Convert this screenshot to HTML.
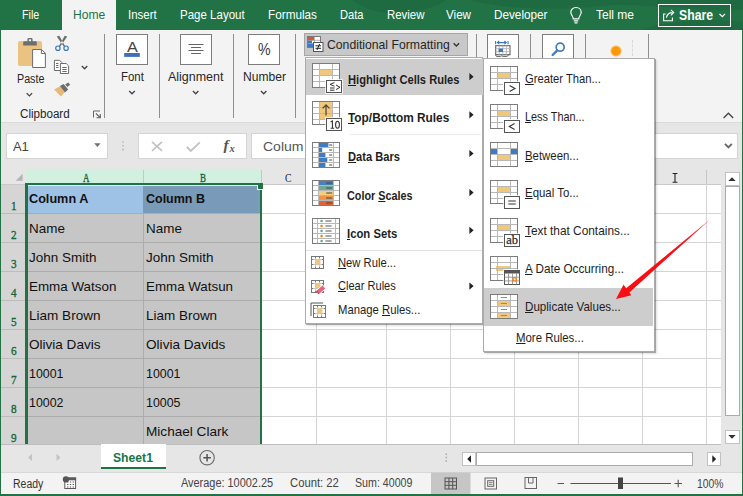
<!DOCTYPE html>
<html><head><meta charset="utf-8">
<style>
*{box-sizing:border-box;margin:0;padding:0}
html,body{width:743px;height:496px;overflow:hidden;background:#f3f3f3}
body{font-family:"Liberation Sans",sans-serif;font-size:12px;color:#262626;position:relative}
.a{position:absolute}
.t{position:absolute;white-space:nowrap;line-height:1;transform-origin:0 0;color:#262626}
.sep{position:absolute;width:1px;background:#8f8f8f;top:34px;height:84px}
.bx{position:absolute;top:34px;width:32px;height:31px;background:#fff;border:1px solid #7d7d7d}
.wbox{position:absolute;background:#fff;border:1px solid #d4d4d4}
.menu{position:absolute;background:#fff;border:1px solid #ababab;box-shadow:1px 1px 0 rgba(0,0,0,.28),2px 2px 2px rgba(0,0,0,.12)}
.hl{position:absolute;background:#cdcdcd}
u{text-decoration:underline;text-underline-offset:0.5px;text-decoration-thickness:1px}
svg{position:absolute;overflow:visible}
.vl{position:absolute;width:1px;background:#d4d4d4;top:184px;height:260px}
.hln{position:absolute;height:1px;background:#d4d4d4;left:262px;width:459px}
</style></head><body>

<div class="a" style="left:0;top:0;width:743px;height:30px;background:#217346"></div>
<svg style="left:0;top:0" width="743" height="30" viewBox="0 0 743 30"><path d="M352 0 C362 8 380 15 400 13 C420 11 436 8 446 0 Z M470 0 C500 9 560 11 600 6 C640 2 690 12 743 10 V0 Z M640 30 C670 20 710 18 743 22 V30 Z" fill="#000" opacity=".07"/></svg>
<div class="a" style="left:62px;top:0;width:54px;height:30px;background:#f3f3f3"></div>
<span class="t" style="left:21.80px;top:7.89px;font-size:13.30px;color:#fff;transform:scaleX(0.8023);">File</span>
<span class="t" style="left:72.70px;top:7.89px;font-size:13.30px;color:#217346;transform:scaleX(0.9103);">Home</span>
<span class="t" style="left:128.00px;top:7.89px;font-size:13.30px;color:#fff;transform:scaleX(0.8628);">Insert</span>
<span class="t" style="left:180.20px;top:7.89px;font-size:13.30px;color:#fff;transform:scaleX(0.8665);">Page Layout</span>
<span class="t" style="left:268.00px;top:7.89px;font-size:13.30px;color:#fff;transform:scaleX(0.8841);">Formulas</span>
<span class="t" style="left:340.40px;top:7.89px;font-size:13.30px;color:#fff;transform:scaleX(0.8365);">Data</span>
<span class="t" style="left:387.00px;top:7.89px;font-size:13.30px;color:#fff;transform:scaleX(0.8599);">Review</span>
<span class="t" style="left:446.00px;top:7.89px;font-size:13.30px;color:#fff;transform:scaleX(0.8743);">View</span>
<span class="t" style="left:493.50px;top:7.89px;font-size:13.30px;color:#fff;transform:scaleX(0.8827);">Developer</span>
<span class="t" style="left:595.50px;top:7.89px;font-size:13.30px;color:#fff;transform:scaleX(0.9021);">Tell me</span>
<div class="a" style="left:658px;top:3.5px;width:72.5px;height:23px;border:1px solid #fff"></div>
<span class="t" style="left:679.20px;top:7.90px;font-size:14.00px;color:#fff;font-weight:bold;transform:scaleX(0.8735);">Share</span>
<svg class="a" style="left:0;top:0" width="1" height="1"><path d="M719.5 13.9 L722.3 16.7 L725.1 13.9" fill="none" stroke="#fff" stroke-width="1.3"/></svg>
<svg style="left:663px;top:8px" width="14" height="14" viewBox="0 0 14 14"><path d="M2.6 6 H0.6 V12.8 H9.4 V9.6" fill="none" stroke="#fff" stroke-width="1.1"/><path d="M3.4 9.8 C3.8 6.6 5.8 4.6 9.6 4.6 M7.8 1.8 L10.8 4.6 L7.8 7.4" fill="none" stroke="#fff" stroke-width="1.1"/></svg>
<svg style="left:568px;top:6px" width="16" height="20" viewBox="0 0 16 20"><path d="M8 1.5 C4.5 1.5 2.8 4 2.8 6.3 C2.8 8.8 5 10 5.3 12.8 H10.7 C11 10 13.2 8.8 13.2 6.3 C13.2 4 11.5 1.5 8 1.5 Z M5.8 14.8 H10.2 M6.5 16.8 H9.5" fill="none" stroke="#fff" stroke-width="1.2"/></svg>
<div class="a" style="left:0;top:30px;width:743px;height:92px;background:#f3f3f3"></div>
<div class="sep" style="left:104px"></div><div class="sep" style="left:159px"></div><div class="sep" style="left:233px"></div><div class="sep" style="left:295px"></div><div class="sep" style="left:475.5px"></div><div class="sep" style="left:530px"></div><div class="sep" style="left:585px"></div><div class="sep" style="left:648px"></div>
<div class="bx" style="left:116px"></div><div class="bx" style="left:180px"></div><div class="bx" style="left:248px"></div><div class="bx" style="left:487px;height:26px"></div><div class="bx" style="left:542px;height:26px"></div>
<span class="t" style="left:16.80px;top:73.20px;font-size:12.00px;transform:scaleX(0.8929);">Paste</span><span class="t" style="left:120.70px;top:70.90px;font-size:12.00px;transform:scaleX(0.9535);">Font</span><span class="t" style="left:168.40px;top:70.90px;font-size:12.00px;transform:scaleX(1.0379);">Alignment</span><span class="t" style="left:242.70px;top:70.90px;font-size:12.00px;transform:scaleX(1.0073);">Number</span><span class="t" style="left:19.60px;top:107.60px;font-size:12.00px;transform:scaleX(0.9674);">Clipboard</span>
<svg class="a" style="left:0;top:0" width="1" height="1"><path d="M26.6 93.1 L29.4 95.9 L32.1 93.1" fill="none" stroke="#444" stroke-width="1.3"/></svg><svg class="a" style="left:0;top:0" width="1" height="1"><path d="M129.2 91.0 L132.0 93.8 L134.8 91.0" fill="none" stroke="#444" stroke-width="1.3"/></svg><svg class="a" style="left:0;top:0" width="1" height="1"><path d="M192.9 91.0 L195.7 93.8 L198.4 91.0" fill="none" stroke="#444" stroke-width="1.3"/></svg><svg class="a" style="left:0;top:0" width="1" height="1"><path d="M260.9 91.0 L263.7 93.8 L266.4 91.0" fill="none" stroke="#444" stroke-width="1.3"/></svg><svg class="a" style="left:0;top:0" width="1" height="1"><path d="M81.8 66.0 L84.6 68.8 L87.3 66.0" fill="none" stroke="#444" stroke-width="1.3"/></svg>
<svg class="a" style="left:0;top:0" width="1" height="1"><path d="M723.6 118 L728.4 113.2 L733.2 118" fill="none" stroke="#444" stroke-width="1.3"/></svg>
<!-- paste -->
<svg style="left:0;top:0" width="110" height="122" viewBox="0 0 110 122">
<rect x="18" y="41" width="24" height="25" rx="2" fill="#eac282"/>
<path d="M23.2 45.4 V42.6 Q23.2 41.2 24.6 41.2 H27.4 V39.4 Q27.4 38 28.8 38 H31.2 Q32.6 38 32.6 39.4 V41.2 H35.4 Q36.8 41.2 36.8 42.6 V45.4 Z" fill="#6d6d6d"/>
<rect x="28.9" y="39.3" width="2.2" height="1.9" fill="#f3f3f3"/>
<path d="M32.6 49.5 H41.6 L45.4 53.3 V67.5 H32.6 Z" fill="#fff" stroke="#6d6d6d" stroke-width="1"/>
<path d="M41.4 49.6 V53.5 H45.3" fill="none" stroke="#6d6d6d" stroke-width="1"/>
<!-- scissors -->
<path d="M56.8 36.6 L59.3 35.8 L63 42.6 L65.2 46.2 L64 46.8 L61.2 43 Z M67.2 36.6 L64.7 35.8 L61 42.6 L58.8 46.2 L60 46.8 L62.8 43 Z" fill="#6d6d6d"/>
<circle cx="57.9" cy="48.2" r="2.2" fill="none" stroke="#3b78c2" stroke-width="1.2"/>
<circle cx="66.1" cy="48.2" r="2.2" fill="none" stroke="#3b78c2" stroke-width="1.2"/>
<!-- copy -->
<path d="M54.4 60.3 H59.6 L61.8 62.5 V70.5 H54.4 Z" fill="#fff" stroke="#6d6d6d" stroke-width="1"/>
<path d="M60.4 63.5 H66.2 L68.6 65.9 V73.5 H60.4 Z" fill="#fff" stroke="#6d6d6d" stroke-width="1"/>
<path d="M56 63.5 H58.5 M56 65.5 H58.5 M56 67.5 H58.5 M62.3 67.5 H66.7 M62.3 69.5 H66.7 M62.3 71.5 H66.7" stroke="#3b78c2" stroke-width="1"/>
<!-- format painter -->
<path d="M54.1 89.6 L60.2 86.2 L64.5 92.2 L61 96.5 Z" fill="#eab874"/>
<path d="M59.9 86 L63.6 83.9 L68.2 89.4 L64.9 92.4 Z" fill="#6d6d6d"/>
<path d="M65.2 84.4 L68.2 82.6 L70.2 84.8 L67.3 87 Z" fill="#6d6d6d"/>
<!-- dialog launcher -->
<path d="M93.5 117.5 V111 H100" fill="none" stroke="#666" stroke-width="1"/>
<path d="M96 113.5 L100 117.5 M100.3 114 V117.8 H96.5" fill="none" stroke="#666" stroke-width="1.1"/>
</svg>
<!-- Font A -->
<svg style="left:116px;top:34px" width="32" height="31" viewBox="0 0 32 31">
<rect x="8.2" y="19" width="15.6" height="3.9" fill="#3f6fb5"/></svg>
<!-- alignment -->
<svg style="left:180px;top:34px" width="32" height="31" viewBox="0 0 32 31">
<path d="M8.5 10.5 H23.5 M11 13.5 H21 M8.5 16.5 H23.5 M11 19.5 H21" stroke="#666" stroke-width="1"/></svg>
<span class="t" style="left:258.20px;top:41.06px;font-size:16.40px;color:#3a3a3a;transform:scaleX(0.8643);">%</span><span class="t" style="left:126.90px;top:38.51px;font-size:15.40px;color:#444;transform:scaleX(1.0521);">A</span>
<div class="a" style="left:304px;top:33px;width:164px;height:23px;background:#c8c8c8;border:1px solid #a6a6a6"></div>
<svg style="left:307px;top:36px" width="17" height="16" viewBox="0 0 17 16">
<rect x="0.5" y="0.5" width="13" height="11" fill="#fff" stroke="#7a7a7a" stroke-width="1"/>
<rect x="1" y="1" width="6" height="3.3" fill="#d9532c"/><rect x="1" y="4.3" width="4" height="3.3" fill="#3f78c2"/><rect x="1" y="7.6" width="6" height="3.4" fill="#3f78c2"/>
<path d="M7.5 1 V11 M1 4.3 H13 M1 7.6 H13" stroke="#9a9a9a" stroke-width=".7"/>
<rect x="6.5" y="6.5" width="9.5" height="9" fill="#fff" stroke="#555" stroke-width="1"/>
<path d="M8.5 9.8 H14 M8.5 12.3 H14 M12.6 8 L10 14" stroke="#222" stroke-width="1" fill="none"/></svg>
<span class="t" style="left:326.70px;top:37.78px;font-size:13.20px;transform:scaleX(0.9255);">Conditional Formatting</span><svg class="a" style="left:0;top:0" width="1" height="1"><path d="M453.6 43.2 L456.4 46.0 L459.1 43.2" fill="none" stroke="#333" stroke-width="1.3"/></svg>
<svg style="left:487px;top:34px" width="32" height="26" viewBox="0 0 32 26">
<path d="M8.6 7 V10.2 M21 7 V10.2 M10.6 8.6 H19 M12.2 7 L10.4 8.6 L12.2 10.2 M17.4 7 L19.2 8.6 L17.4 10.2" fill="none" stroke="#3b78c2" stroke-width="1.1"/>
<rect x="8.7" y="11.7" width="14.3" height="9" fill="#fff" stroke="#5f5f5f" stroke-width="1.1"/>
<path d="M12.2 11.7 V20.7 M15.8 11.7 V20.7 M19.4 11.7 V20.7 M8.7 14.7 H23 M8.7 17.7 H23" stroke="#b4b4b4" stroke-width=".9"/>
<rect x="11.6" y="14.6" width="4.4" height="3.4" fill="#3b78c2"/>
<path d="M8.9 20.7 V21.6 Q8.9 22.4 9.8 22.4 H13.6 Q14.4 22.4 14.8 21.6 Q15.2 22.4 16 22.4 H19.8 Q20.8 22.4 21.4 21.2" fill="none" stroke="#5f5f5f" stroke-width="1"/></svg>
<svg style="left:542px;top:34px" width="32" height="26" viewBox="0 0 32 26">
<circle cx="18.2" cy="13.2" r="4" fill="#fff" stroke="#3f7cc4" stroke-width="1.7"/><path d="M15 16.6 L10.6 21" stroke="#3f7cc4" stroke-width="2.3" stroke-linecap="round"/></svg>
<div class="a" style="left:606px;top:41px;width:20px;height:20px;border-radius:50%;background:radial-gradient(circle closest-side,#ff9908 0,#ff9908 40%,rgba(255,158,30,.7) 49%,rgba(255,190,110,0) 60%)"></div>
<div class="a" style="left:632px;top:40px;width:0;height:16px;border-left:1px dashed #d8d8d8"></div>

<div class="a" style="left:0;top:122px;width:743px;height:47px;background:#e6e6e6"></div>
<div class="a" style="left:0;top:122px;width:743px;height:1px;background:#dadada"></div>
<div class="wbox" style="left:6px;top:133px;width:101.5px;height:25.5px"></div>
<div class="wbox" style="left:138px;top:133px;width:109.3px;height:25.5px"></div>
<div class="wbox" style="left:251px;top:133px;width:486.5px;height:25.5px"></div>
<svg style="left:0;top:122px" width="743" height="47" viewBox="0 122 743 47">
<path d="M94.2 143.2 H100.6 L97.4 147 Z" fill="#6f6f6f"/>
<path d="M122.4 142 h1.3 M122.4 145.8 h1.3 M122.4 149.6 h1.3" stroke="#b0b0b0" stroke-width="1.6"/>
<path d="M152 141.8 L162 150.8 M162 141.8 L152 150.8" stroke="#c2c2c2" stroke-width="1.7" fill="none"/>
<path d="M186.8 147 L190.8 151 L199.8 142.3" stroke="#c2c2c2" stroke-width="1.8" fill="none"/>
<path d="M725 143.8 L728.4 147.4 L731.8 143.8" stroke="#666" stroke-width="1.8" fill="none"/>
</svg>
<span class="t" style="left:13.10px;top:140.28px;font-size:13.20px;color:#444;transform:scaleX(0.9789);">A1</span><span class="t" style="left:263.00px;top:140.28px;font-size:13.20px;color:#555;transform:scaleX(1.0627);">Colum</span>
<span class="t" style="left:223.60px;top:137.42px;font-size:15.50px;color:#555;font-weight:bold;font-family:'Liberation Serif',serif;"><i>f</i></span><span class="t" style="left:229.40px;top:143.67px;font-size:10.50px;color:#555;font-style:italic;font-weight:bold;font-family:'Liberation Serif',serif;">x</span>

<div class="a" style="left:0;top:169px;width:743px;height:275px;background:#e6e6e6"></div>
<div class="a" style="left:26px;top:184px;width:695px;height:260px;background:#fff"></div>
<div class="a" style="left:26px;top:169px;width:234.5px;height:14.5px;background:#d2f0e0"></div>
<div class="a" style="left:1px;top:184px;width:25px;height:260px;background:#d5d5d5"></div>
<div class="a" style="left:0;top:183.5px;width:721px;height:1px;background:#c9c9c9"></div>
<div class="vl" style="left:316px"></div><div class="vl" style="left:386px"></div><div class="vl" style="left:450px"></div><div class="vl" style="left:514px"></div><div class="vl" style="left:578px"></div><div class="vl" style="left:642px"></div><div class="vl" style="left:706px"></div>
<div class="hln" style="top:213px"></div><div class="hln" style="top:242px"></div><div class="hln" style="top:271px"></div><div class="hln" style="top:300px"></div><div class="hln" style="top:329px"></div><div class="hln" style="top:358px"></div><div class="hln" style="top:387px"></div><div class="hln" style="top:416px"></div>
<div class="a" style="left:143px;top:170px;width:1px;height:13.5px;background:#c6c6c6"></div><div class="a" style="left:260.5px;top:170px;width:1px;height:13.5px;background:#c6c6c6"></div><div class="a" style="left:316px;top:170px;width:1px;height:13.5px;background:#c6c6c6"></div><div class="a" style="left:386px;top:170px;width:1px;height:13.5px;background:#c6c6c6"></div><div class="a" style="left:450px;top:170px;width:1px;height:13.5px;background:#c6c6c6"></div><div class="a" style="left:514px;top:170px;width:1px;height:13.5px;background:#c6c6c6"></div><div class="a" style="left:578px;top:170px;width:1px;height:13.5px;background:#c6c6c6"></div><div class="a" style="left:642px;top:170px;width:1px;height:13.5px;background:#c6c6c6"></div><div class="a" style="left:706px;top:170px;width:1px;height:13.5px;background:#c6c6c6"></div>
<div class="a" style="left:1px;top:213px;width:24.5px;height:1px;background:#bcbcbc"></div><div class="a" style="left:1px;top:242px;width:24.5px;height:1px;background:#bcbcbc"></div><div class="a" style="left:1px;top:271px;width:24.5px;height:1px;background:#bcbcbc"></div><div class="a" style="left:1px;top:300px;width:24.5px;height:1px;background:#bcbcbc"></div><div class="a" style="left:1px;top:329px;width:24.5px;height:1px;background:#bcbcbc"></div><div class="a" style="left:1px;top:358px;width:24.5px;height:1px;background:#bcbcbc"></div><div class="a" style="left:1px;top:387px;width:24.5px;height:1px;background:#bcbcbc"></div><div class="a" style="left:1px;top:416px;width:24.5px;height:1px;background:#bcbcbc"></div>
<div class="a" style="left:28px;top:186px;width:231.5px;height:258px;background:#c6c6c6"></div>
<div class="a" style="left:28px;top:186px;width:115px;height:27px;background:#9dc2e6"></div>
<div class="a" style="left:143px;top:186px;width:116.5px;height:27px;background:#7a9ab9"></div>
<div class="a" style="left:143px;top:213px;width:1px;height:231px;background:#acacac"></div>
<div class="a" style="left:28px;top:213px;width:231.5px;height:1px;background:#acacac"></div><div class="a" style="left:28px;top:242px;width:231.5px;height:1px;background:#acacac"></div><div class="a" style="left:28px;top:271px;width:231.5px;height:1px;background:#acacac"></div><div class="a" style="left:28px;top:300px;width:231.5px;height:1px;background:#acacac"></div><div class="a" style="left:28px;top:329px;width:231.5px;height:1px;background:#acacac"></div><div class="a" style="left:28px;top:358px;width:231.5px;height:1px;background:#acacac"></div><div class="a" style="left:28px;top:387px;width:231.5px;height:1px;background:#acacac"></div><div class="a" style="left:28px;top:416px;width:231.5px;height:1px;background:#acacac"></div>
<div class="a" style="left:25.3px;top:182.7px;width:236.5px;height:2.4px;background:#217346"></div>
<div class="a" style="left:25.3px;top:182.7px;width:2.4px;height:262px;background:#217346"></div>
<div class="a" style="left:259.7px;top:182.7px;width:2.2px;height:262px;background:#217346"></div>
<div class="a" style="left:27.7px;top:185.1px;width:232px;height:1px;background:#e8eef0"></div>
<div class="a" style="left:256.8px;top:185.1px;width:6.4px;height:4.6px;background:#fff"></div>
<div class="a" style="left:257.8px;top:183px;width:5.2px;height:5.7px;background:#217346"></div>
<svg style="left:0;top:169px" width="30" height="15" viewBox="0 169 30 15"><path d="M22.6 173.8 V180.8 H15.6 Z" fill="#b4b4b4"/></svg>
<span class="t" style="left:82.50px;top:171.84px;font-size:12.00px;font-family:'Liberation Serif',serif;color:#17653a;-webkit-text-stroke:0.35px #17653a;transform:scaleX(0.7495);">A</span><span class="t" style="left:199.50px;top:171.84px;font-size:12.00px;font-family:'Liberation Serif',serif;color:#17653a;-webkit-text-stroke:0.35px #17653a;transform:scaleX(0.7485);">B</span><span class="t" style="left:285.00px;top:171.84px;font-size:12.00px;font-family:'Liberation Serif',serif;color:#222;transform:scaleX(0.8109);">C</span>
<span class="t" style="left:10.60px;top:200.22px;font-size:12.50px;font-family:'Liberation Serif',serif;color:#17653a;-webkit-text-stroke:0.35px #17653a;transform:scaleX(0.8960);">1</span><span class="t" style="left:10.60px;top:229.22px;font-size:12.50px;font-family:'Liberation Serif',serif;color:#17653a;-webkit-text-stroke:0.35px #17653a;transform:scaleX(0.8960);">2</span><span class="t" style="left:10.60px;top:258.23px;font-size:12.50px;font-family:'Liberation Serif',serif;color:#17653a;-webkit-text-stroke:0.35px #17653a;transform:scaleX(0.8960);">3</span><span class="t" style="left:10.60px;top:287.23px;font-size:12.50px;font-family:'Liberation Serif',serif;color:#17653a;-webkit-text-stroke:0.35px #17653a;transform:scaleX(0.8960);">4</span><span class="t" style="left:10.60px;top:316.23px;font-size:12.50px;font-family:'Liberation Serif',serif;color:#17653a;-webkit-text-stroke:0.35px #17653a;transform:scaleX(0.8960);">5</span><span class="t" style="left:10.60px;top:345.23px;font-size:12.50px;font-family:'Liberation Serif',serif;color:#17653a;-webkit-text-stroke:0.35px #17653a;transform:scaleX(0.8960);">6</span><span class="t" style="left:10.60px;top:374.23px;font-size:12.50px;font-family:'Liberation Serif',serif;color:#17653a;-webkit-text-stroke:0.35px #17653a;transform:scaleX(0.8960);">7</span><span class="t" style="left:10.60px;top:403.23px;font-size:12.50px;font-family:'Liberation Serif',serif;color:#17653a;-webkit-text-stroke:0.35px #17653a;transform:scaleX(0.8960);">8</span><span class="t" style="left:10.60px;top:432.23px;font-size:12.50px;font-family:'Liberation Serif',serif;color:#17653a;-webkit-text-stroke:0.35px #17653a;transform:scaleX(0.8960);">9</span>
<span class="t" style="left:29.30px;top:192.86px;font-size:12.40px;color:#111;font-weight:bold;transform:scaleX(1.0216);">Column A</span><span class="t" style="left:29.30px;top:222.86px;font-size:12.40px;color:#111;transform:scaleX(1.0858);">Name</span><span class="t" style="left:29.30px;top:251.86px;font-size:12.40px;color:#111;transform:scaleX(1.0874);">John Smith</span><span class="t" style="left:29.30px;top:280.86px;font-size:12.40px;color:#111;transform:scaleX(1.0817);">Emma Watson</span><span class="t" style="left:29.30px;top:309.86px;font-size:12.40px;color:#111;transform:scaleX(1.0929);">Liam Brown</span><span class="t" style="left:29.30px;top:338.86px;font-size:12.40px;color:#111;transform:scaleX(1.0929);">Olivia Davis</span><span class="t" style="left:29.30px;top:367.86px;font-size:12.40px;color:#111;transform:scaleX(0.9980);">10001</span><span class="t" style="left:29.30px;top:396.86px;font-size:12.40px;color:#111;transform:scaleX(0.9980);">10002</span><span class="t" style="left:146.30px;top:192.86px;font-size:12.40px;color:#111;font-weight:bold;transform:scaleX(1.0083);">Column B</span><span class="t" style="left:146.30px;top:222.86px;font-size:12.40px;color:#111;transform:scaleX(1.0858);">Name</span><span class="t" style="left:146.30px;top:251.86px;font-size:12.40px;color:#111;transform:scaleX(1.0874);">John Smith</span><span class="t" style="left:146.30px;top:280.86px;font-size:12.40px;color:#111;transform:scaleX(1.0768);">Emma Watsun</span><span class="t" style="left:146.30px;top:309.86px;font-size:12.40px;color:#111;transform:scaleX(1.0868);">Liam Brown</span><span class="t" style="left:146.30px;top:338.86px;font-size:12.40px;color:#111;transform:scaleX(1.0980);">Olivia Davids</span><span class="t" style="left:146.30px;top:367.86px;font-size:12.40px;color:#111;transform:scaleX(0.9980);">10001</span><span class="t" style="left:146.30px;top:396.86px;font-size:12.40px;color:#111;transform:scaleX(0.9980);">10005</span><span class="t" style="left:146.30px;top:425.86px;font-size:12.40px;color:#111;transform:scaleX(1.0964);">Michael Clark</span>
<svg style="left:669.5px;top:171px" width="10" height="14" viewBox="0 0 10 14"><path d="M2.6 2.5 H7.4 M5 2.5 V11.2 M2.6 11.2 H7.4" stroke="#222" stroke-width="1.1" fill="none"/></svg>
<div class="a" style="left:721px;top:169px;width:21px;height:275px;background:#e6e6e6"></div>
<div class="a" style="left:724.5px;top:171.5px;width:15px;height:14.5px;background:#fff;border:1px solid #c1c1c1"></div>
<div class="a" style="left:724.5px;top:186px;width:15px;height:230px;background:#fff;border:1px solid #ababab"></div>
<div class="a" style="left:724.5px;top:429.5px;width:15px;height:14.5px;background:#fff;border:1px solid #c1c1c1"></div>
<svg style="left:721px;top:169px" width="21" height="275" viewBox="721 169 21 275"><path d="M728.3 181 L732 177.3 L735.7 181 Z M728.3 435 L735.7 435 L732 438.7 Z" fill="#333"/></svg>

<div class="a" style="left:0;top:444px;width:743px;height:29px;background:#e6e6e6"></div>
<div class="a" style="left:0;top:443.5px;width:721px;height:1px;background:#bdbdbd"></div>
<div class="a" style="left:0;top:472.5px;width:743px;height:21.5px;background:#f3f3f3"></div>
<div class="a" style="left:0;top:472px;width:743px;height:1px;background:#d8d8d8"></div>
<div class="a" style="left:101px;top:444px;width:64.5px;height:25px;background:#fff;border-bottom:2.4px solid #217346"></div>
<svg style="left:0;top:444px" width="743" height="52" viewBox="0 444 743 52">
<path d="M32 453.8 V461 L28 457.4 Z M56.5 453.8 V461 L60.5 457.4 Z" fill="#c3c3c3"/>
<circle cx="207.1" cy="457.7" r="7.2" fill="none" stroke="#6a6a6a" stroke-width="1.1"/>
<path d="M203.3 457.7 H210.9 M207.1 453.9 V461.5" stroke="#555" stroke-width="1.5"/>
<path d="M445.6 454.3 h1.3 M445.6 457.6 h1.3 M445.6 460.9 h1.3" stroke="#a0a0a0" stroke-width="1.5"/>
<!-- hscroll -->
<rect x="462.5" y="452.5" width="13" height="13" fill="#fff" stroke="#c1c1c1"/>
<rect x="476.5" y="452.5" width="216" height="13" fill="#fff" stroke="#ababab"/>
<rect x="707.5" y="452.5" width="13" height="13" fill="#fff" stroke="#c1c1c1"/>
<path d="M471 455.3 V462.7 L467.2 459 Z M712.3 455.3 V462.7 L716.1 459 Z" fill="#222"/>
<!-- macro icon -->
<rect x="64.8" y="478" width="10.8" height="10.5" fill="#fff" stroke="#5a5a5a" stroke-width="1"/>
<rect x="64.3" y="477.5" width="11.8" height="2.8" fill="#5a5a5a"/>
<circle cx="65.9" cy="479.4" r="3.1" fill="#555"/>
<path d="M67 482 h1.4 M69.8 482 h1.4 M72.6 482 h1.4 M67 484.5 h1.4 M69.8 484.5 h1.4 M72.6 484.5 h1.4 M67 487 h1.4 M69.8 487 h1.4 M72.6 487 h1.4" stroke="#5a5a5a" stroke-width="1"/>
<!-- view buttons -->
<rect x="431" y="472.5" width="39.5" height="21.5" fill="#c6c6c6"/>
<rect x="445" y="478" width="11.5" height="11" fill="none" stroke="#555" stroke-width="1"/>
<path d="M448.9 478 V489 M452.7 478 V489 M445 481.7 H456.5 M445 485.3 H456.5" stroke="#555" stroke-width="1"/>
<rect x="485" y="478" width="11.5" height="11" fill="none" stroke="#666" stroke-width="1"/>
<rect x="487.7" y="480.7" width="6" height="5.6" fill="none" stroke="#666" stroke-width="1"/>
<path d="M489 482.6 h3.5 M489 484.4 h3.5" stroke="#666" stroke-width=".8"/>
<rect x="525" y="477.5" width="11.5" height="11" fill="none" stroke="#666" stroke-width="1"/>
<path d="M528.5 477.5 V483 H533 V477.5" fill="none" stroke="#666" stroke-width="1"/>
<!-- zoom -->
<path d="M557.5 483.5 H564 M570.5 483.5 H671 M674.5 483.5 H682 M678.2 479.8 V487.2" stroke="#555" stroke-width="1.1"/>
<rect x="618" y="477.5" width="5" height="11.5" fill="#444"/>
</svg>
<span class="t" style="left:113.00px;top:450.78px;font-size:13.20px;color:#217346;font-weight:bold;transform:scaleX(0.9225);">Sheet1</span><span class="t" style="left:12.70px;top:478.30px;font-size:12.00px;color:#333;transform:scaleX(0.8735);">Ready</span><span class="t" style="left:180.90px;top:476.60px;font-size:12.00px;color:#444;transform:scaleX(0.9101);">Average: 10002.25</span><span class="t" style="left:289.80px;top:476.60px;font-size:12.00px;color:#444;transform:scaleX(0.9376);">Count: 22</span><span class="t" style="left:355.40px;top:476.60px;font-size:12.00px;color:#444;transform:scaleX(0.8869);">Sum: 40009</span><span class="t" style="left:697.00px;top:478.10px;font-size:12.00px;color:#444;transform:scaleX(0.8631);">100%</span>

<div class="menu" style="left:304.5px;top:57px;width:178.5px;height:267.3px"></div>
<div class="hl" style="left:305.5px;top:58.8px;width:177px;height:36.6px"></div>
<div class="a" style="left:350px;top:134px;width:131px;height:1px;background:#ececec"></div>
<div class="a" style="left:306px;top:249.7px;width:175.5px;height:1px;background:#e1e1e1"></div>
<span class="t" style="left:347.80px;top:74.02px;font-size:12.80px;font-weight:bold;color:#1e1e1e;transform:scaleX(0.8711);"><u>H</u>ighlight Cells Rules</span><span class="t" style="left:347.80px;top:112.12px;font-size:12.80px;font-weight:bold;color:#1e1e1e;transform:scaleX(0.9272);"><u>T</u>op/Bottom Rules</span><span class="t" style="left:347.80px;top:151.22px;font-size:12.80px;font-weight:bold;color:#1e1e1e;transform:scaleX(0.8701);"><u>D</u>ata Bars</span><span class="t" style="left:347.40px;top:189.82px;font-size:12.80px;font-weight:bold;color:#1e1e1e;transform:scaleX(0.8447);">Color <u>S</u>cales</span><span class="t" style="left:347.40px;top:227.82px;font-size:12.80px;font-weight:bold;color:#1e1e1e;transform:scaleX(0.8839);"><u>I</u>con Sets</span><span class="t" style="left:338.00px;top:256.92px;font-size:12.80px;color:#1e1e1e;transform:scaleX(0.8767);"><u>N</u>ew Rule...</span><span class="t" style="left:338.00px;top:280.42px;font-size:12.80px;color:#1e1e1e;transform:scaleX(0.8643);"><u>C</u>lear Rules</span><span class="t" style="left:338.00px;top:304.32px;font-size:12.80px;color:#1e1e1e;transform:scaleX(0.8829);">Manage <u>R</u>ules...</span>
<svg class="a" style="left:0;top:0" width="1" height="1"><path d="M469.4 73.1 L473.6 76.7 L469.4 80.3 Z" fill="#222"/></svg><svg class="a" style="left:0;top:0" width="1" height="1"><path d="M469.4 111.2 L473.6 114.8 L469.4 118.4 Z" fill="#222"/></svg><svg class="a" style="left:0;top:0" width="1" height="1"><path d="M469.4 149.9 L473.6 153.5 L469.4 157.1 Z" fill="#222"/></svg><svg class="a" style="left:0;top:0" width="1" height="1"><path d="M469.4 189.0 L473.6 192.6 L469.4 196.2 Z" fill="#222"/></svg><svg class="a" style="left:0;top:0" width="1" height="1"><path d="M469.4 226.7 L473.6 230.3 L469.4 233.9 Z" fill="#222"/></svg><svg class="a" style="left:0;top:0" width="1" height="1"><path d="M469.4 282.5 L473.6 286.1 L469.4 289.7 Z" fill="#222"/></svg>
<svg style="left:312px;top:63px" width="36" height="33" viewBox="0 0 36 33"><rect x="0" y="0" width="28" height="25" fill="#fff"/><rect x="8.0" y="7.0" width="12.0" height="5.0" fill="#f0c87c"/><path d="M7.5 0 V25 M20.5 0 V25 M0 6.5 H28 M0 12.5 H28 M0 18.5 H28 " stroke="#b8b8b8" stroke-width="1" fill="none"/><rect x="0.5" y="0.5" width="27" height="24" fill="none" stroke="#7c7c7c" stroke-width="1"/><rect x="14.5" y="17.5" width="15.0" height="12.0" fill="#fff" stroke="#fff" stroke-width="2.5"/><rect x="14.5" y="17.5" width="15.0" height="12.0" fill="#fff" stroke="#555" stroke-width="1"/><path d="M22.5 19.6 L18 21.4 L22.5 23.2 M18 25 H22.5 M18 27.2 H22.5 M24 22 L28 24.3 L24 26.6" fill="none" stroke="#333" stroke-width="1"/></svg><svg style="left:312px;top:101px" width="36" height="32" viewBox="0 0 36 32"><rect x="0" y="0" width="28" height="24" fill="#fff"/><rect x="8.0" y="1.0" width="12.0" height="17.0" fill="#f0c87c"/><path d="M7.5 0 V24 M20.5 0 V24 M0 6.5 H28 M0 12.5 H28 M0 18.5 H28 " stroke="#b8b8b8" stroke-width="1" fill="none"/><rect x="0.5" y="0.5" width="27" height="23" fill="none" stroke="#7c7c7c" stroke-width="1"/><path d="M14 14.5 V4 M10.6 7.3 L14 3.8 L17.4 7.3" fill="none" stroke="#444" stroke-width="1.2"/><rect x="14.5" y="17.5" width="15.0" height="12.0" fill="#fff" stroke="#fff" stroke-width="2.5"/><rect x="14.5" y="17.5" width="15.0" height="12.0" fill="#fff" stroke="#555" stroke-width="1"/><path d="M18.6 21 L20.4 20 V27.3 M18.6 27.3 H22.2" fill="none" stroke="#333" stroke-width="1.1"/><ellipse cx="25.5" cy="23.7" rx="1.9" ry="3.5" fill="none" stroke="#333" stroke-width="1.1"/></svg><svg style="left:312px;top:142px" width="36" height="34" viewBox="0 0 36 34"><rect x="0" y="0" width="28" height="26" fill="#fff"/><path d="M6.5 0 V26 M21.5 0 V26 M0 5.5 H28 M0 10.5 H28 M0 15.5 H28 M0 20.5 H28 " stroke="#b8b8b8" stroke-width="1" fill="none"/><rect x="0.5" y="0.5" width="27" height="25" fill="none" stroke="#7c7c7c" stroke-width="1"/><rect x="7" y="1" width="9.4" height="4" fill="#3f7cc4"/><path d="M17.2 3 h3" stroke="#444" stroke-width="1"/><rect x="7" y="6" width="3.2" height="4" fill="#3f7cc4"/><path d="M17.2 8 h3" stroke="#444" stroke-width="1"/><rect x="7" y="11" width="6.4" height="4" fill="#3f7cc4"/><path d="M17.2 13 h3" stroke="#444" stroke-width="1"/><rect x="7" y="16" width="8.3" height="4" fill="#3f7cc4"/><path d="M17.2 18 h3" stroke="#444" stroke-width="1"/><rect x="7" y="21" width="6.4" height="4" fill="#3f7cc4"/><path d="M17.2 23 h3" stroke="#444" stroke-width="1"/></svg><svg style="left:312px;top:180px" width="36" height="34" viewBox="0 0 36 34"><rect x="0" y="0" width="28" height="26" fill="#fff"/><path d="M6.5 0 V26 M21.5 0 V26 M0 5.5 H28 M0 10.5 H28 M0 15.5 H28 M0 20.5 H28 " stroke="#b8b8b8" stroke-width="1" fill="none"/><rect x="0.5" y="0.5" width="27" height="25" fill="none" stroke="#7c7c7c" stroke-width="1"/><rect x="7" y="1" width="14" height="4" fill="#4a7fbf"/><path d="M14.2 3 h6" stroke="#444" stroke-width="1"/><rect x="7" y="6" width="14" height="4" fill="#72a993"/><path d="M14.2 8 h6" stroke="#444" stroke-width="1"/><rect x="7" y="11" width="14" height="4" fill="#f2cf80"/><path d="M14.2 13 h6" stroke="#444" stroke-width="1"/><rect x="7" y="16" width="14" height="4" fill="#ee9546"/><path d="M14.2 18 h6" stroke="#444" stroke-width="1"/><rect x="7" y="21" width="14" height="4" fill="#de6338"/><path d="M14.2 23 h6" stroke="#444" stroke-width="1"/></svg><svg style="left:312px;top:218px" width="36" height="34" viewBox="0 0 36 34"><rect x="0" y="0" width="28" height="26" fill="#fff"/><path d="M5.5 0 V26 M23.5 0 V26 M0 5.5 H28 M0 10.5 H28 M0 15.5 H28 M0 20.5 H28 " stroke="#b8b8b8" stroke-width="1" fill="none"/><rect x="0.5" y="0.5" width="27" height="25" fill="none" stroke="#7c7c7c" stroke-width="1"/><circle cx="9.6" cy="3" r="1.3" fill="#5fa59a"/><path d="M13.4 3 h6.2" stroke="#555" stroke-width="1"/><circle cx="9.6" cy="8" r="1.3" fill="#f08018"/><path d="M13.4 8 h6.2" stroke="#555" stroke-width="1"/><circle cx="9.6" cy="13" r="1.3" fill="#5fa59a"/><path d="M13.4 13 h6.2" stroke="#555" stroke-width="1"/><circle cx="9.6" cy="18" r="1.3" fill="#f08018"/><path d="M13.4 18 h6.2" stroke="#555" stroke-width="1"/><circle cx="9.6" cy="23" r="1.3" fill="#5fa59a"/><path d="M13.4 23 h6.2" stroke="#555" stroke-width="1"/></svg><svg style="left:311px;top:256px" width="20" height="20" viewBox="0 0 20 20"><rect x="0.5" y="0.5" width="12" height="12" fill="#fff" stroke="#777" stroke-width="1"/><path d="M4.5 1 V12 M8.5 1 V12 M1 3.5 H12 M1 8.5 H12" stroke="#c4c4c4" stroke-width="1"/><path d="M4.5 0.5 V2 M8.5 0.5 V2 M4.5 11 V12.5 M8.5 11 V12.5 M0.5 3.5 H2 M0.5 8.5 H2 M11 3.5 H12.5 M11 8.5 H12.5" stroke="#777" stroke-width="1"/><rect x="4" y="3.3" width="5.4" height="5" fill="#f0c87c"/></svg><svg style="left:311px;top:280px" width="20" height="20" viewBox="0 0 20 20"><rect x="0.5" y="0.5" width="12" height="12" fill="#fff" stroke="#777" stroke-width="1"/><path d="M4.5 1 V12 M8.5 1 V12 M1 3.5 H12 M1 8.5 H12" stroke="#c4c4c4" stroke-width="1"/><path d="M4.5 0.5 V2 M8.5 0.5 V2 M4.5 11 V12.5 M8.5 11 V12.5 M0.5 3.5 H2 M0.5 8.5 H2 M11 3.5 H12.5 M11 8.5 H12.5" stroke="#777" stroke-width="1"/><rect x="4" y="3.3" width="5.4" height="5" fill="#f0c87c"/><path d="M5 10.6 L11.6 5 L14.8 8.6 L8.2 14.2 Z" fill="#e9647e" stroke="#fff" stroke-width="1"/><path d="M5.4 10.9 L8 13.9" stroke="#c9405f" stroke-width="1.4"/></svg><svg style="left:313px;top:305px" width="20" height="20" viewBox="0 0 20 20"><path d="M-2 11 V-2 H10" fill="none" stroke="#555" stroke-width="1"/><rect x="0.5" y="0.5" width="12" height="12" fill="#fff" stroke="#777" stroke-width="1"/><path d="M4.5 1 V12 M8.5 1 V12 M1 3.5 H12 M1 8.5 H12" stroke="#c4c4c4" stroke-width="1"/><path d="M4.5 0.5 V2 M8.5 0.5 V2 M4.5 11 V12.5 M8.5 11 V12.5 M0.5 3.5 H2 M0.5 8.5 H2 M11 3.5 H12.5 M11 8.5 H12.5" stroke="#777" stroke-width="1"/><rect x="4" y="3.3" width="5.4" height="5" fill="#f0c87c"/></svg>

<div class="menu" style="left:482.6px;top:58px;width:172.2px;height:294px"></div>
<div class="hl" style="left:484.2px;top:288.3px;width:169px;height:37.5px"></div>
<span class="t" style="left:525.20px;top:73.12px;font-size:12.80px;color:#1e1e1e;transform:scaleX(0.8757);"><u>G</u>reater Than...</span><span class="t" style="left:525.20px;top:111.22px;font-size:12.80px;color:#1e1e1e;transform:scaleX(0.8490);"><u>L</u>ess Than...</span><span class="t" style="left:525.20px;top:150.32px;font-size:12.80px;color:#1e1e1e;transform:scaleX(0.8895);"><u>B</u>etween...</span><span class="t" style="left:525.20px;top:187.22px;font-size:12.80px;color:#1e1e1e;transform:scaleX(0.8929);"><u>E</u>qual To...</span><span class="t" style="left:525.20px;top:224.92px;font-size:12.80px;color:#1e1e1e;transform:scaleX(0.9265);"><u>T</u>ext that Contains...</span><span class="t" style="left:525.20px;top:262.92px;font-size:12.80px;color:#1e1e1e;transform:scaleX(0.9156);"><u>A</u> Date Occurring...</span><span class="t" style="left:525.20px;top:300.92px;font-size:12.80px;color:#1e1e1e;transform:scaleX(0.9058);"><u>D</u>uplicate Values...</span><span class="t" style="left:516.10px;top:332.32px;font-size:12.80px;color:#1e1e1e;transform:scaleX(0.8908);"><u>M</u>ore Rules...</span>
<svg style="left:490px;top:66px" width="36" height="33" viewBox="0 0 36 33"><rect x="0" y="0" width="28" height="25" fill="#fff"/><rect x="8.0" y="7.0" width="12.0" height="5.0" fill="#f0c87c"/><path d="M7.5 0 V25 M20.5 0 V25 M0 6.5 H28 M0 12.5 H28 M0 18.5 H28 " stroke="#b8b8b8" stroke-width="1" fill="none"/><rect x="0.5" y="0.5" width="27" height="24" fill="none" stroke="#7c7c7c" stroke-width="1"/><rect x="14.5" y="16.5" width="15.0" height="12.0" fill="#fff" stroke="#fff" stroke-width="2.5"/><rect x="14.5" y="16.5" width="15.0" height="12.0" fill="#fff" stroke="#555" stroke-width="1"/><path d="M19.6 19.6 L24.9 22.5 L19.6 25.4" fill="none" stroke="#333" stroke-width="1.1"/></svg><svg style="left:490px;top:104px" width="36" height="33" viewBox="0 0 36 33"><rect x="0" y="0" width="28" height="25" fill="#fff"/><rect x="8.0" y="7.0" width="12.0" height="5.0" fill="#f0c87c"/><path d="M7.5 0 V25 M20.5 0 V25 M0 6.5 H28 M0 12.5 H28 M0 18.5 H28 " stroke="#b8b8b8" stroke-width="1" fill="none"/><rect x="0.5" y="0.5" width="27" height="24" fill="none" stroke="#7c7c7c" stroke-width="1"/><rect x="14.5" y="16.5" width="15.0" height="12.0" fill="#fff" stroke="#fff" stroke-width="2.5"/><rect x="14.5" y="16.5" width="15.0" height="12.0" fill="#fff" stroke="#555" stroke-width="1"/><path d="M24.6 19.6 L19.3 22.5 L24.6 25.4" fill="none" stroke="#333" stroke-width="1.1"/></svg><svg style="left:490px;top:142px" width="36" height="33" viewBox="0 0 36 33"><rect x="0" y="0" width="28" height="25" fill="#fff"/><rect x="1.0" y="7.0" width="6.0" height="5.0" fill="#3f7cc4"/><rect x="21.0" y="7.0" width="6.0" height="5.0" fill="#3f7cc4"/><rect x="8.0" y="13.0" width="12.0" height="5.0" fill="#f0c87c"/><path d="M7.5 0 V25 M20.5 0 V25 M0 6.5 H28 M0 12.5 H28 M0 18.5 H28 " stroke="#b8b8b8" stroke-width="1" fill="none"/><rect x="0.5" y="0.5" width="27" height="24" fill="none" stroke="#7c7c7c" stroke-width="1"/></svg><svg style="left:490px;top:180px" width="36" height="32" viewBox="0 0 36 32"><rect x="0" y="0" width="28" height="24" fill="#fff"/><rect x="8.0" y="7.0" width="12.0" height="5.0" fill="#f0c87c"/><path d="M7.5 0 V24 M20.5 0 V24 M0 6.5 H28 M0 12.5 H28 M0 18.5 H28 " stroke="#b8b8b8" stroke-width="1" fill="none"/><rect x="0.5" y="0.5" width="27" height="23" fill="none" stroke="#7c7c7c" stroke-width="1"/><rect x="14.5" y="16.5" width="15.0" height="12.0" fill="#fff" stroke="#fff" stroke-width="2.5"/><rect x="14.5" y="16.5" width="15.0" height="12.0" fill="#fff" stroke="#555" stroke-width="1"/><path d="M18.3 21 H25.8 M18.3 24 H25.8" fill="none" stroke="#333" stroke-width="1.1"/></svg><svg style="left:490px;top:218px" width="36" height="33" viewBox="0 0 36 33"><rect x="0" y="0" width="28" height="25" fill="#fff"/><rect x="8.0" y="7.0" width="12.0" height="5.0" fill="#f0c87c"/><path d="M7.5 0 V25 M20.5 0 V25 M0 6.5 H28 M0 12.5 H28 M0 18.5 H28 " stroke="#b8b8b8" stroke-width="1" fill="none"/><rect x="0.5" y="0.5" width="27" height="24" fill="none" stroke="#7c7c7c" stroke-width="1"/><rect x="14.5" y="16.5" width="15.0" height="12.0" fill="#fff" stroke="#fff" stroke-width="2.5"/><rect x="14.5" y="16.5" width="15.0" height="12.0" fill="#fff" stroke="#555" stroke-width="1"/><text x="16.3" y="26.4" font-family="Liberation Serif" font-size="12.5" fill="#2a2a2a" stroke="#2a2a2a" stroke-width=".25">ab</text></svg><svg style="left:490px;top:256px" width="36" height="33" viewBox="0 0 36 33"><rect x="0" y="0" width="28" height="25" fill="#fff"/><rect x="6.0" y="10.0" width="15.0" height="5.0" fill="#f0c87c"/><path d="M7.5 0 V25 M20.5 0 V25 M0 6.5 H28 M0 12.5 H28 M0 18.5 H28 " stroke="#b8b8b8" stroke-width="1" fill="none"/><rect x="0.5" y="0.5" width="27" height="24" fill="none" stroke="#7c7c7c" stroke-width="1"/><rect x="14.5" y="14.5" width="15.0" height="14.0" fill="#fff" stroke="#fff" stroke-width="2.5"/><rect x="14.5" y="14.5" width="15.0" height="14.0" fill="#fff" stroke="#555" stroke-width="1"/><rect x="14.5" y="14.5" width="15" height="3" fill="#555"/><path d="M18.5 17.5 V28.5 M22.5 17.5 V28.5 M26.5 17.5 V28.5 M14.5 21.2 H29.5 M14.5 24.9 H29.5" stroke="#888" stroke-width=".8"/><rect x="23" y="21.7" width="3.2" height="3.2" fill="#fff" stroke="#f08018" stroke-width="1.3"/></svg><svg style="left:490px;top:294px" width="36" height="33" viewBox="0 0 36 33"><rect x="0" y="0" width="28" height="25" fill="#fff"/><rect x="8.0" y="7.0" width="12.0" height="5.0" fill="#f0c87c"/><rect x="8.0" y="19.0" width="12.0" height="5.0" fill="#f0c87c"/><path d="M7.5 0 V25 M20.5 0 V25 M0 6.5 H28 M0 12.5 H28 M0 18.5 H28 " stroke="#b8b8b8" stroke-width="1" fill="none"/><rect x="0.5" y="0.5" width="27" height="24" fill="none" stroke="#7c7c7c" stroke-width="1"/><path d="M10.8 3.5 H17 M10.8 9.5 H17 M10.8 15.5 H17 M10.8 21.5 H17" stroke="#8a8a8a" stroke-width="1"/></svg>
<svg style="left:600px;top:210px" width="120" height="100" viewBox="600 210 120 100">
<path d="M710 219.6 L626.2 288.2 L623.5 284.8 L616 298.9 L631.4 295.2 L629.4 292.4 Z" fill="#fb0d14"/>
</svg>

<div class="a" style="left:0;top:30px;width:1px;height:466px;background:#217346"></div>
<div class="a" style="left:741.5px;top:30px;width:1.5px;height:466px;background:#217346"></div>
<div class="a" style="left:0;top:493.7px;width:743px;height:2.3px;background:#217346"></div>

</body></html>
